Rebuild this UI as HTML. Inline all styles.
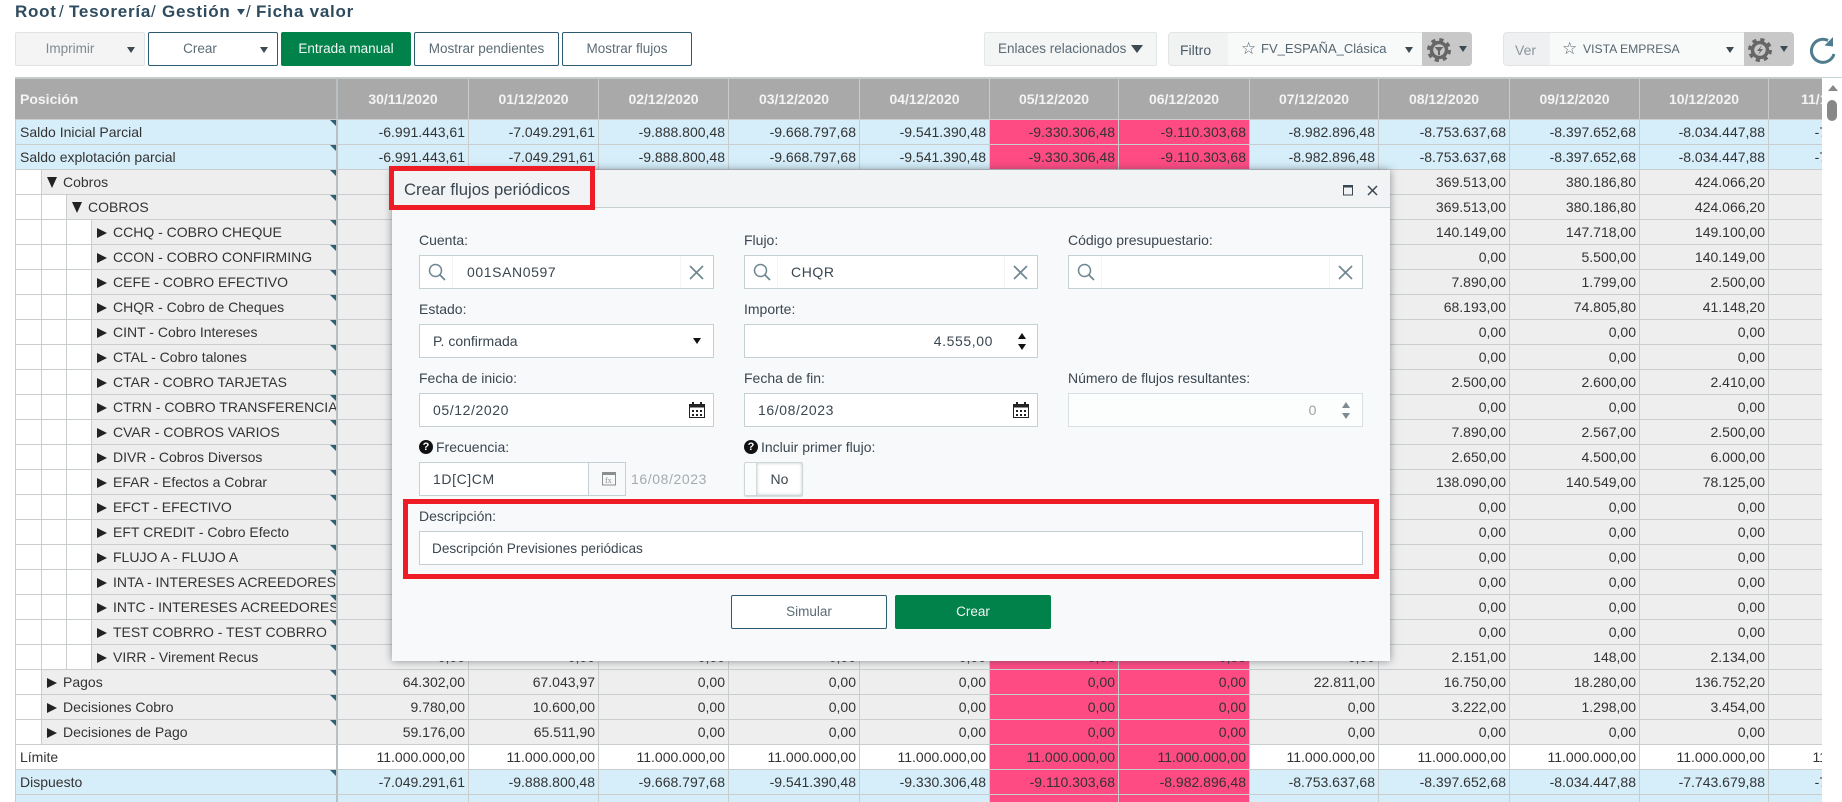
<!DOCTYPE html>
<html lang="es"><head><meta charset="utf-8"><title>Ficha valor</title>
<style>
html,body{margin:0;padding:0;background:#fff}
body{position:relative;width:1842px;height:802px;overflow:hidden;font:14px "Liberation Sans",Arial,sans-serif;color:#333}
.a{position:absolute;white-space:nowrap}
.t{font-weight:bold;font-size:17px;letter-spacing:.75px;color:#2f4b5e;top:2px;line-height:20px}
.b{position:absolute;top:32px;height:34px;box-sizing:border-box;border:1px solid #2c5a70;border-radius:2px;background:#fff;color:#5b6b75;font-size:13.5px;line-height:32px;text-align:center;white-space:nowrap}
.tri{position:absolute;width:0;height:0;border-left:4px solid transparent;border-right:4px solid transparent;border-top:6px solid #3d4a52}
.tbl{position:absolute;left:15px;top:77px;width:1807px;height:725px;overflow:hidden}
table{border-collapse:separate;border-spacing:0;table-layout:fixed;width:1890px}
th{height:42px;box-sizing:border-box;padding:0;background:#a9a9a9;color:#f4f4f4;font-size:14px;font-weight:bold;border-top:2px solid #c6cccb;border-right:1px solid #c8cacb}
th:first-child{text-align:left;padding-left:5px;border-right:2px solid #b8c0c4}
td{height:25px;box-sizing:border-box;padding:1px 3px 0 0;border-top:1px solid #c9cdce;border-right:1px solid #c9cdce;text-align:right;white-space:nowrap;overflow:hidden;line-height:23px;font-size:14px}
td.l{position:relative;text-align:left;padding-left:4px;padding-right:0;border-left:1px solid #c9cdce;border-right:2px solid #b8c0c4}
tr.bl td{background:#d6eefa}tr.gr td{background:#eee}tr.wh td{background:#fff}
tr td.p{background:#ff4b84}
td.v{padding-top:0;line-height:21px}
tr td.t1{padding-left:31px;background:linear-gradient(90deg,#fff 25px,#c9cdce 25px,#c9cdce 26px,#eee 26px)}
tr td.t2{padding-left:56px;background:linear-gradient(90deg,#fff 25px,#c9cdce 25px,#c9cdce 26px,#fff 26px,#fff 50px,#c9cdce 50px,#c9cdce 51px,#eee 51px)}
tr td.t3{padding-left:81px;background:linear-gradient(90deg,#fff 25px,#c9cdce 25px,#c9cdce 26px,#fff 26px,#fff 50px,#c9cdce 50px,#c9cdce 51px,#fff 51px,#fff 75px,#c9cdce 75px,#c9cdce 76px,#eee 76px)}
td.m:after{content:"";position:absolute;right:0;top:0;width:0;height:0;border-top:6px solid #2f5f70;border-left:6px solid transparent}
i.r{display:inline-block;width:0;height:0;border-top:5.5px solid transparent;border-bottom:5.5px solid transparent;border-left:10px solid #222;margin-right:6px;vertical-align:-1px}
i.d{display:inline-block;width:0;height:0;border-left:5px solid transparent;border-right:5px solid transparent;border-top:11px solid #222;margin-right:6px;vertical-align:-1px}
.modal{position:absolute;left:392px;top:170px;width:998px;height:491px;background:#f8f9fb;box-shadow:0 0 8px rgba(50,60,70,.55)}
.mh{position:absolute;left:392px;top:170px;width:998px;height:37px;background:#f2f3f5;border-bottom:1px solid #c6d0d3}
.lb{position:absolute;white-space:nowrap;font-size:14px;line-height:18px;color:#3a4650}
.in{position:absolute;height:34px;box-sizing:border-box;background:#fff;border:1px solid #c5d0d4;font-size:14px;line-height:33px;letter-spacing:.6px;color:#3a4650;white-space:nowrap}
.sp{position:absolute;top:0;bottom:0;width:1px;background:#f3f6f7}
.red{position:absolute;box-sizing:border-box;border:5px solid #ee1c25}
</style></head><body>

<span class="a t" style="left:15px">Root</span><span class="a t" style="left:59px;font-weight:normal">/</span>
<span class="a t" style="left:69px">Tesorería</span><span class="a t" style="left:151px;font-weight:normal">/</span>
<span class="a t" style="left:162px">Gestión</span><i class="tri" style="left:237px;top:9px;border-top-color:#2f4b5e"></i><span class="a t" style="left:246px;font-weight:normal">/</span>
<span class="a t" style="left:256px">Ficha valor</span>

<div class="b" style="left:15px;width:130px;background:#f4f4f4;border-color:#dfe3e4;color:#7d8a90;padding-right:20px">Imprimir</div><i class="tri" style="left:127px;top:47px"></i>
<div class="b" style="left:148px;width:130px;padding-right:26px">Crear</div><i class="tri" style="left:260px;top:47px"></i>
<div class="b" style="left:281px;width:130px;background:#00824a;border-color:#00824a;color:#f2f8f4">Entrada manual</div>
<div class="b" style="left:414px;width:145px">Mostrar pendientes</div>
<div class="b" style="left:562px;width:130px">Mostrar flujos</div>

<div class="b" style="left:984px;width:173px;background:#f4f5f5;border-color:#e2e6e7;color:#5b6b75;text-align:left;padding-left:13px;font-size:13.5px">Enlaces relacionados</div><i class="tri" style="left:1131px;top:45px;border-left-width:6.5px;border-right-width:6.5px;border-top:8px solid #3d4a52"></i>

<div class="a" style="left:1168px;top:32px;width:304px;height:34px;box-sizing:border-box;background:#f1f3f3;border:1px solid #e1e5e6;border-radius:4px"></div>
<div class="a" style="left:1228px;top:33px;width:194px;height:32px;background:#f8f9f9"></div>
<div class="a" style="left:1422px;top:32px;width:50px;height:34px;background:#c8c8c8;border-radius:0 4px 4px 0"></div>
<span class="a" style="left:1180px;top:41px;font-size:14px;line-height:18px;color:#4a5a66">Filtro</span>
<span class="a" style="left:1241px;top:39px;font-size:17px;line-height:20px;color:#55656f">☆</span>
<span class="a" style="left:1261px;top:40px;font-size:13px;line-height:18px;color:#55656f">FV_ESPAÑA_Clásica</span>
<i class="tri" style="left:1405px;top:47px"></i>
<svg class="a" style="left:1426px;top:37px" width="26" height="26" viewBox="-13 -13 26 26"><circle r="7.5" fill="none" stroke="#666" stroke-width="3.5"/><circle r="10.5" fill="none" stroke="#666" stroke-width="3" stroke-dasharray="4.2 4.05"/><path d="M-4.5-3H4.5L1 1V5H-1V1Z" fill="#666"/></svg>
<i class="tri" style="left:1459px;top:46px"></i>

<div class="a" style="left:1503px;top:32px;width:291px;height:34px;box-sizing:border-box;background:#eef0f1;border:1px solid #e1e5e6;border-radius:4px"></div>
<div class="a" style="left:1550px;top:33px;width:194px;height:32px;background:#f8f9f9"></div>
<div class="a" style="left:1744px;top:32px;width:50px;height:34px;background:#c8c8c8;border-radius:0 4px 4px 0"></div>
<span class="a" style="left:1515px;top:41px;font-size:14px;line-height:18px;color:#8a969d">Ver</span>
<span class="a" style="left:1562px;top:39px;font-size:17px;line-height:20px;color:#55656f">☆</span>
<span class="a" style="left:1583px;top:40px;font-size:12.2px;line-height:18px;color:#55656f">VISTA EMPRESA</span>
<i class="tri" style="left:1726px;top:47px"></i>
<svg class="a" style="left:1747px;top:37px" width="26" height="26" viewBox="-13 -13 26 26"><circle r="7.5" fill="none" stroke="#666" stroke-width="3.5"/><circle r="10.5" fill="none" stroke="#666" stroke-width="3" stroke-dasharray="4.2 4.05"/><path d="M2-5L-3 1H0L-2 5L3-1H0Z" fill="#666"/></svg>
<i class="tri" style="left:1780px;top:46px"></i>
<svg class="a" style="left:1808px;top:36px" width="28" height="28" viewBox="0 0 28 28"><path d="M26 18A11.5 11.5 0 1 1 20 4.500" fill="none" stroke="#4f7d8f" stroke-width="3"/><path d="M25 1V10.500L16.500 9.500Z" fill="#4f7d8f"/></svg>

<div class="a" style="left:1822px;top:77px;width:20px;height:1px;background:#c6d5d8"></div>
<i class="tri" style="left:1828px;top:85px;border-top:0;border-left-width:5px;border-right-width:5px;border-bottom:6px solid #888"></i>
<div class="a" style="left:1827px;top:100px;width:10px;height:21px;background:#888;border-radius:5px"></div>

<div class="tbl"><table>
<colgroup><col style="width:323px"><col style="width:131px"><col style="width:130px"><col style="width:130px"><col style="width:131px"><col style="width:130px"><col style="width:129px"><col style="width:131px"><col style="width:129px"><col style="width:131px"><col style="width:130px"><col style="width:129px"><col style="width:136px"></colgroup>
<tr><th>Posición</th><th>30/11/2020</th><th>01/12/2020</th><th>02/12/2020</th><th>03/12/2020</th><th>04/12/2020</th><th>05/12/2020</th><th>06/12/2020</th><th>07/12/2020</th><th>08/12/2020</th><th>09/12/2020</th><th>10/12/2020</th><th style="text-align:left;padding-left:32px">11/12/2020</th></tr>
<tr class="bl"><td class="l m">Saldo Inicial Parcial</td><td>-6.991.443,61</td><td>-7.049.291,61</td><td>-9.888.800,48</td><td>-9.668.797,68</td><td>-9.541.390,48</td><td class="p">-9.330.306,48</td><td class="p">-9.110.303,68</td><td>-8.982.896,48</td><td>-8.753.637,68</td><td>-8.397.652,68</td><td>-8.034.447,88</td><td>-7.743.679,88</td></tr>
<tr class="bl"><td class="l m">Saldo explotación parcial</td><td>-6.991.443,61</td><td>-7.049.291,61</td><td>-9.888.800,48</td><td>-9.668.797,68</td><td>-9.541.390,48</td><td class="p">-9.330.306,48</td><td class="p">-9.110.303,68</td><td>-8.982.896,48</td><td>-8.753.637,68</td><td>-8.397.652,68</td><td>-8.034.447,88</td><td>-7.743.679,88</td></tr>
<tr class="gr"><td class="l m t1"><i class="d"></i>Cobros</td><td colspan="8"></td><td>369.513,00</td><td>380.186,80</td><td>424.066,20</td><td></td></tr>
<tr class="gr"><td class="l m t2"><i class="d"></i>COBROS</td><td colspan="8"></td><td>369.513,00</td><td>380.186,80</td><td>424.066,20</td><td></td></tr>
<tr class="gr"><td class="l m t3"><i class="r"></i>CCHQ - COBRO CHEQUE</td><td colspan="8"></td><td>140.149,00</td><td>147.718,00</td><td>149.100,00</td><td></td></tr>
<tr class="gr"><td class="l m t3"><i class="r"></i>CCON - COBRO CONFIRMING</td><td colspan="8"></td><td>0,00</td><td>5.500,00</td><td>140.149,00</td><td></td></tr>
<tr class="gr"><td class="l m t3"><i class="r"></i>CEFE - COBRO EFECTIVO</td><td colspan="8"></td><td>7.890,00</td><td>1.799,00</td><td>2.500,00</td><td></td></tr>
<tr class="gr"><td class="l m t3"><i class="r"></i>CHQR - Cobro de Cheques</td><td colspan="8"></td><td>68.193,00</td><td>74.805,80</td><td>41.148,20</td><td></td></tr>
<tr class="gr"><td class="l m t3"><i class="r"></i>CINT - Cobro Intereses</td><td colspan="8"></td><td>0,00</td><td>0,00</td><td>0,00</td><td></td></tr>
<tr class="gr"><td class="l m t3"><i class="r"></i>CTAL - Cobro talones</td><td colspan="8"></td><td>0,00</td><td>0,00</td><td>0,00</td><td></td></tr>
<tr class="gr"><td class="l m t3"><i class="r"></i>CTAR - COBRO TARJETAS</td><td colspan="8"></td><td>2.500,00</td><td>2.600,00</td><td>2.410,00</td><td></td></tr>
<tr class="gr"><td class="l m t3"><i class="r"></i>CTRN - COBRO TRANSFERENCIA</td><td colspan="8"></td><td>0,00</td><td>0,00</td><td>0,00</td><td></td></tr>
<tr class="gr"><td class="l m t3"><i class="r"></i>CVAR - COBROS VARIOS</td><td colspan="8"></td><td>7.890,00</td><td>2.567,00</td><td>2.500,00</td><td></td></tr>
<tr class="gr"><td class="l m t3"><i class="r"></i>DIVR - Cobros Diversos</td><td colspan="8"></td><td>2.650,00</td><td>4.500,00</td><td>6.000,00</td><td></td></tr>
<tr class="gr"><td class="l m t3"><i class="r"></i>EFAR - Efectos a Cobrar</td><td colspan="8"></td><td>138.090,00</td><td>140.549,00</td><td>78.125,00</td><td></td></tr>
<tr class="gr"><td class="l m t3"><i class="r"></i>EFCT - EFECTIVO</td><td colspan="8"></td><td>0,00</td><td>0,00</td><td>0,00</td><td></td></tr>
<tr class="gr"><td class="l m t3"><i class="r"></i>EFT CREDIT - Cobro Efecto</td><td colspan="8"></td><td>0,00</td><td>0,00</td><td>0,00</td><td></td></tr>
<tr class="gr"><td class="l m t3"><i class="r"></i>FLUJO A - FLUJO A</td><td colspan="8"></td><td>0,00</td><td>0,00</td><td>0,00</td><td></td></tr>
<tr class="gr"><td class="l m t3"><i class="r"></i>INTA - INTERESES ACREEDORES</td><td colspan="8"></td><td>0,00</td><td>0,00</td><td>0,00</td><td></td></tr>
<tr class="gr"><td class="l m t3"><i class="r"></i>INTC - INTERESES ACREEDORES</td><td colspan="8"></td><td>0,00</td><td>0,00</td><td>0,00</td><td></td></tr>
<tr class="gr"><td class="l m t3"><i class="r"></i>TEST COBRRO - TEST COBRRO</td><td colspan="8"></td><td>0,00</td><td>0,00</td><td>0,00</td><td></td></tr>
<tr class="gr"><td class="l m t3"><i class="r"></i>VIRR - Virement Recus</td><td class="v">0,00</td><td class="v">0,00</td><td class="v">0,00</td><td class="v">0,00</td><td class="v">0,00</td><td class="p v">0,00</td><td class="p v">0,00</td><td class="v">0,00</td><td>2.151,00</td><td>148,00</td><td>2.134,00</td><td></td></tr>
<tr class="gr"><td class="l m t1"><i class="r"></i>Pagos</td><td>64.302,00</td><td>67.043,97</td><td>0,00</td><td>0,00</td><td>0,00</td><td class="p">0,00</td><td class="p">0,00</td><td>22.811,00</td><td>16.750,00</td><td>18.280,00</td><td>136.752,20</td><td></td></tr>
<tr class="gr"><td class="l m t1"><i class="r"></i>Decisiones Cobro</td><td>9.780,00</td><td>10.600,00</td><td>0,00</td><td>0,00</td><td>0,00</td><td class="p">0,00</td><td class="p">0,00</td><td>0,00</td><td>3.222,00</td><td>1.298,00</td><td>3.454,00</td><td></td></tr>
<tr class="gr"><td class="l m t1"><i class="r"></i>Decisiones de Pago</td><td>59.176,00</td><td>65.511,90</td><td>0,00</td><td>0,00</td><td>0,00</td><td class="p">0,00</td><td class="p">0,00</td><td>0,00</td><td>0,00</td><td>0,00</td><td>0,00</td><td></td></tr>
<tr class="wh"><td class="l">Límite</td><td>11.000.000,00</td><td>11.000.000,00</td><td>11.000.000,00</td><td>11.000.000,00</td><td>11.000.000,00</td><td class="p">11.000.000,00</td><td class="p">11.000.000,00</td><td>11.000.000,00</td><td>11.000.000,00</td><td>11.000.000,00</td><td>11.000.000,00</td><td>11.000.000,00</td></tr>
<tr class="bl"><td class="l m">Dispuesto</td><td>-7.049.291,61</td><td>-9.888.800,48</td><td>-9.668.797,68</td><td>-9.541.390,48</td><td>-9.330.306,48</td><td class="p">-9.110.303,68</td><td class="p">-8.982.896,48</td><td>-8.753.637,68</td><td>-8.397.652,68</td><td>-8.034.447,88</td><td>-7.743.679,88</td><td>-7.432.000,00</td></tr>
<tr class="bl"><td class="l"></td><td></td><td></td><td></td><td></td><td></td><td class="p"></td><td class="p"></td><td></td><td></td><td></td><td></td><td></td></tr>
</table></div>

<div class="modal"></div><div class="mh"></div>
<span class="a" style="left:404px;top:180px;font-size:16.7px;line-height:20px;color:#3a4650">Crear flujos periódicos</span>
<svg class="a" style="left:1343px;top:185px" width="11" height="11"><rect x=".5" y=".5" width="9" height="9.500" fill="none" stroke="#3a4650"/><rect width="10" height="2.500" fill="#3a4650"/></svg>
<svg class="a" style="left:1367px;top:185px" width="11" height="11"><path d="M1 1L10 10M10 1L1 10" stroke="#3a4650" stroke-width="1.500"/></svg>

<span class="lb" style="left:419px;top:231px">Cuenta:</span>
<span class="lb" style="left:744px;top:231px">Flujo:</span>
<span class="lb" style="left:1068px;top:231px">Código presupuestario:</span>

<div class="in" style="left:419px;top:255px;width:295px;padding-left:47px">001SAN0597<span class="sp" style="left:32px"></span><span class="sp" style="left:260px"></span></div>
<div class="in" style="left:744px;top:255px;width:294px;padding-left:46px">CHQR<span class="sp" style="left:32px"></span><span class="sp" style="left:259px"></span></div>
<div class="in" style="left:1068px;top:255px;width:295px"><span class="sp" style="left:32px"></span><span class="sp" style="left:260px"></span></div>

<svg class="a" style="left:428px;top:263px" width="18" height="18"><circle cx="7.500" cy="7.500" r="6" fill="none" stroke="#6f8790" stroke-width="1.500"/><path d="M12 12L17 17" stroke="#6f8790" stroke-width="1.800"/></svg>
<svg class="a" style="left:753px;top:263px" width="18" height="18"><circle cx="7.500" cy="7.500" r="6" fill="none" stroke="#6f8790" stroke-width="1.500"/><path d="M12 12L17 17" stroke="#6f8790" stroke-width="1.800"/></svg>
<svg class="a" style="left:1077px;top:263px" width="18" height="18"><circle cx="7.500" cy="7.500" r="6" fill="none" stroke="#6f8790" stroke-width="1.500"/><path d="M12 12L17 17" stroke="#6f8790" stroke-width="1.800"/></svg>
<svg class="a" style="left:689px;top:265px" width="15" height="15"><path d="M1 1L14 14M14 1L1 14" stroke="#6f8790" stroke-width="1.700"/></svg>
<svg class="a" style="left:1013px;top:265px" width="15" height="15"><path d="M1 1L14 14M14 1L1 14" stroke="#6f8790" stroke-width="1.700"/></svg>
<svg class="a" style="left:1338px;top:265px" width="15" height="15"><path d="M1 1L14 14M14 1L1 14" stroke="#6f8790" stroke-width="1.700"/></svg>

<span class="lb" style="left:419px;top:300px">Estado:</span>
<span class="lb" style="left:744px;top:300px">Importe:</span>
<div class="in" style="left:419px;top:324px;width:295px;padding-left:13px;letter-spacing:0">P. confirmada</div>
<i class="tri" style="left:693px;top:338px;border-top-color:#111"></i>
<div class="in" style="left:744px;top:324px;width:294px;text-align:right;padding-right:44px">4.555,00</div>
<i class="tri" style="left:1018px;top:333px;border-top:0;border-bottom:6px solid #111"></i>
<i class="tri" style="left:1018px;top:344px;border-top-color:#111"></i>

<span class="lb" style="left:419px;top:369px">Fecha de inicio:</span>
<span class="lb" style="left:744px;top:369px">Fecha de fin:</span>
<span class="lb" style="left:1068px;top:369px">Número de flujos resultantes:</span>
<div class="in" style="left:419px;top:393px;width:295px;padding-left:13px">05/12/2020</div>
<div class="in" style="left:744px;top:393px;width:294px;padding-left:13px">16/08/2023</div>
<div class="in" style="left:1068px;top:393px;width:295px;background:#fcfdfd;border-color:#d8e0e3;color:#9aa3a8;text-align:right;padding-right:45px">0</div>
<i class="tri" style="left:1342px;top:402px;border-top:0;border-bottom:6px solid #7f8a90"></i>
<i class="tri" style="left:1342px;top:413px;border-top-color:#7f8a90"></i>
<svg class="a" style="left:689px;top:402px" width="16" height="16"><rect x=".5" y="2.500" width="15" height="13" fill="none" stroke="#222"/><rect y="2" width="16" height="3.500" fill="#222"/><path d="M4 0V3M12 0V3" stroke="#222" stroke-width="2"/><path d="M3 8h2v2H3zM7 8h2v2H7zM11 8h2v2h-2zM3 12h2v2H3zM7 12h2v2H7zM11 12h2v2h-2z" fill="#222"/></svg>
<svg class="a" style="left:1013px;top:402px" width="16" height="16"><rect x=".5" y="2.500" width="15" height="13" fill="none" stroke="#222"/><rect y="2" width="16" height="3.500" fill="#222"/><path d="M4 0V3M12 0V3" stroke="#222" stroke-width="2"/><path d="M3 8h2v2H3zM7 8h2v2H7zM11 8h2v2h-2zM3 12h2v2H3zM7 12h2v2H7zM11 12h2v2h-2z" fill="#222"/></svg>

<div class="a" style="left:419px;top:440px;width:14px;height:14px;border-radius:50%;background:#111;color:#fff;font-size:11px;font-weight:bold;line-height:14px;text-align:center">?</div>
<span class="lb" style="left:436px;top:438px">Frecuencia:</span>
<div class="a" style="left:744px;top:440px;width:14px;height:14px;border-radius:50%;background:#111;color:#fff;font-size:11px;font-weight:bold;line-height:14px;text-align:center">?</div>
<span class="lb" style="left:761px;top:438px">Incluir primer flujo:</span>

<div class="in" style="left:419px;top:462px;width:170px;padding-left:13px">1D[C]CM</div>
<div class="a" style="left:588px;top:462px;width:38px;height:34px;box-sizing:border-box;background:#f8f9fb;border:1px solid #c5d0d4"></div>
<svg class="a" style="left:602px;top:471px" width="15" height="15"><rect x=".5" y="1.500" width="13" height="12.500" fill="none" stroke="#8a8f92"/><rect y="1" width="14" height="3" fill="#8a8f92"/><text x="3" y="12" font-family="Liberation Serif,serif" font-size="8" fill="#8a8f92">fx</text></svg>
<span class="a" style="left:631px;top:470px;font-size:14px;line-height:18px;letter-spacing:.6px;color:#a3aaae">16/08/2023</span>

<div class="a" style="left:744px;top:462px;width:59px;height:34px;box-sizing:border-box;background:#fbfcfc;border:1px solid #cfd7da;border-radius:2px;box-shadow:0 1px 1px #d5dbdd"></div>
<div class="a" style="left:757px;top:463px;width:45px;height:32px;background:#fff;border-left:1px solid #d5dcde;box-shadow:inset 0 0 3px #c2c9cc;text-align:center;line-height:32px;color:#3a4650;margin-left:-1px">No</div>

<span class="lb" style="left:419px;top:507px">Descripción:</span>
<div class="in" style="left:419px;top:531px;width:944px;padding-left:12px;letter-spacing:0;font-size:13.6px">Descripción Previsiones periódicas</div>

<div class="b" style="left:731px;top:595px;width:156px;color:#5b6b75">Simular</div>
<div class="b" style="left:895px;top:595px;width:156px;background:#00824a;border-color:#00824a;color:#f2f8f4">Crear</div>

<div class="red" style="left:389px;top:166px;width:206px;height:44px"></div>
<div class="red" style="left:403px;top:499px;width:976px;height:80px"></div>
</body></html>
